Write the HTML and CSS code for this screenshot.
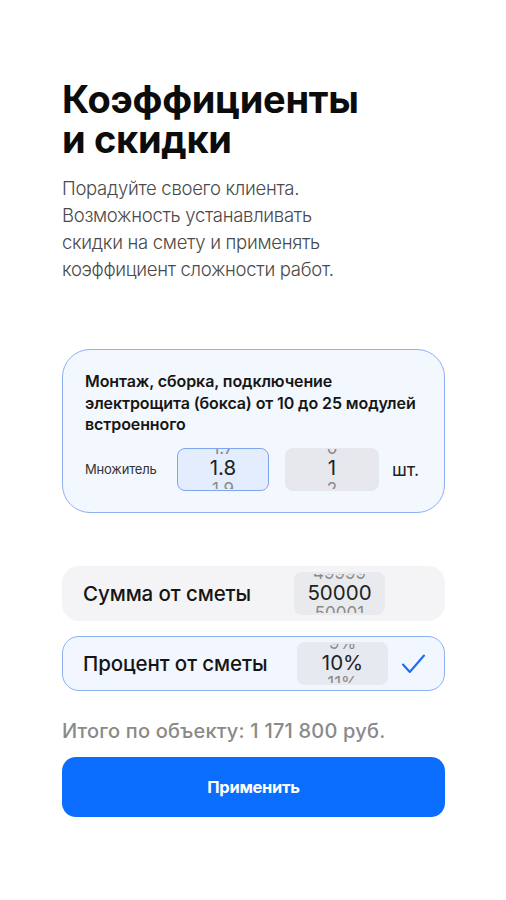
FILE: index.html
```html
<!DOCTYPE html>
<html lang="ru">
<head>
<meta charset="utf-8">
<link rel="stylesheet" href="styles.css">
</head>
<body>
<main class="page">
  <h1 class="title">Коэффициенты<br>и скидки</h1>
  <p class="sub">Порадуйте своего клиента.<br>Возможность устанавливать<br>скидки на смету и применять<br>коэффициент сложности работ.</p>

  <section class="card">
    <div class="card-title">Монтаж, сборка, подключение<br>электрощита (бокса) от 10 до 25 модулей<br>встроенного</div>
    <div class="card-row">
      <span class="mult-label">Множитель</span>
      <div class="picker picker-active picker-sm">
        <span class="pv">1.7</span><span class="cur">1.8</span><span class="nx">1.9</span>
      </div>
      <div class="picker picker-gray picker-sm">
        <span class="pv">0</span><span class="cur">1</span><span class="nx">2</span>
      </div>
      <span class="unit">шт.</span>
    </div>
  </section>

  <section class="options">
    <div class="opt">
      <span class="opt-label">Сумма от сметы</span>
      <div class="picker picker-gray picker-opt">
        <span class="pv">49999</span><span class="cur">50000</span><span class="nx">50001</span>
      </div>
    </div>
    <div class="opt opt-active">
      <span class="opt-label">Процент от сметы</span>
      <div class="picker picker-gray picker-opt picker-pct">
        <span class="pv">9%</span><span class="cur">10%</span><span class="nx">11%</span>
      </div>
      <svg class="check" width="25" height="22" viewBox="0 0 25 22"><path d="M2 11.5 L8.8 19 L23 2.5" fill="none" stroke="#1f6cf0" stroke-width="2.1" stroke-linecap="round" stroke-linejoin="round"/></svg>
    </div>
  </section>

  <div class="total">Итого по объекту: 1 171 800 руб.</div>
  <button class="apply">Применить</button>
</main>
</body>
</html>
```
FILE: styles.css
```css
* { box-sizing: border-box; }
html, body { margin: 0; padding: 0; background: #fff; }
body { font-family: Inter, Roboto, "Noto Sans", sans-serif; color: #111; }
.page { width: 506px; padding: 79px 61px 0 62px; }
.title { margin: 0; font-size: 38px; line-height: 40px; font-weight: 700; letter-spacing: -0.3px; color: #0c0c0c; }
.sub { margin: 16px 0 0; font-size: 18.5px; line-height: 27px; font-weight: 300; color: #4a4a4a; letter-spacing: -0.3px; }

.card { margin-top: 66px; height: 164px; border: 1.5px solid #8db0f2; border-radius: 28px; background: #f3f7fe; padding: 21px 18px 0 22px; }
.card-title { font-size: 16px; line-height: 21.5px; font-weight: 600; color: #161616; letter-spacing: -0.1px; }
.card-row { display: flex; align-items: center; margin-top: 12px; }
.mult-label { font-size: 13px; color: #333; width: 92px; letter-spacing: -0.2px; }

.picker { position: relative; overflow: hidden; border-radius: 8px; display: flex; flex-direction: column; align-items: center; justify-content: center; color: #222; }
.picker span { display: block; line-height: 1; flex: none; }
.picker .pv, .picker .nx { color: #8a8a8a; font-size: 17px; height: 8px; overflow: hidden; }
.picker .pv { display: flex; align-items: flex-end; height: 8px; }
.picker .cur { font-size: 20.5px; margin: 1px 0 2px; }
.picker-sm { width: 92px; height: 43px; }
.picker-active { background: #e3edfd; border: 1.5px solid #7ea6f0; }
.picker-gray { background: #e7e8ed; }
.card-row .picker-gray { margin-left: 16px; width: 94px; }
.unit { margin-left: 13px; font-size: 18px; color: #222; }

.options { margin-top: 53px; display: flex; flex-direction: column; gap: 15px; }
.opt { height: 55px; border-radius: 17px; background: #f4f4f6; display: flex; align-items: center; padding-left: 21px; }
.opt-active { background: #f2f6fe; border: 1.5px solid #8db0f2; padding-left: 20px; }
.opt-label { font-size: 20.5px; font-weight: 500; color: #151515; width: 211px; letter-spacing: -0.1px; }
.opt-active .opt-label { width: 214px; }
.picker-opt { width: 91px; height: 43px; background: #e9eaee; }
.picker-pct { background: #e6e9f0; }
.check { margin-left: 13px; }

.total { margin-top: 28px; font-size: 20px; font-weight: 500; color: #8a8a8a; letter-spacing: 0.2px; }
.apply { margin-top: 14px; width: 100%; height: 60px; border: 0; border-radius: 14px; background: #0a6dfd; color: #fff; font-family: inherit; font-size: 16.5px; font-weight: 700; letter-spacing: -0.3px; }
```
